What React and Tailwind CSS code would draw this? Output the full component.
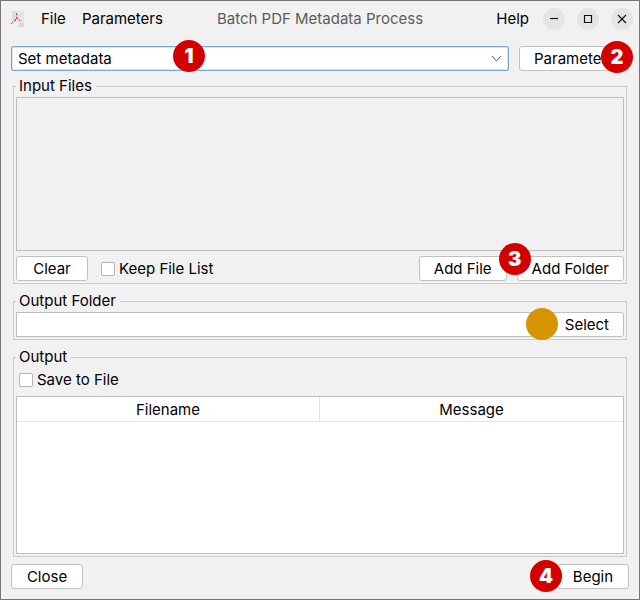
import React, { useState } from "react";

const Badge = ({ children, className }) => (
  <span className={`absolute z-10 flex h-8 w-8 items-center justify-center rounded-full text-xl font-black text-white ${className}`}>
    {children}
  </span>
);

const Button = ({ children, className = "" }) => (
  <button type="button" className={`h-[25px] rounded-[3px] border border-[#c0c0c0] bg-white px-[14px] leading-[23px] whitespace-nowrap ${className}`}>
    {children}
  </button>
);

const Checkbox = ({ label, checked, onChange }) => (
  <label className="flex items-center gap-1">
    <input
      type="checkbox"
      checked={checked}
      onChange={(e) => onChange(e.target.checked)}
      className="h-[14px] w-[14px] appearance-none rounded-[2px] border border-[#b4b4b4] bg-white checked:bg-[#5294e2]"
    />
    {label}
  </label>
);

const Group = ({ title, children, className = "" }) => (
  <fieldset className={`mx-[2px] min-w-0 border border-[#cccccc] px-[2px] pb-[2px] ${className}`}>
    <legend className="pr-1 pl-[3px] leading-5">{title}</legend>
    {children}
  </fieldset>
);

const AppIcon = () => (
  <svg width="13" height="16" viewBox="0 0 13 16" className="mr-[17px]">
    <path d="M1 0h12v16H1z" fill="#e2e6eb" />
    <path d="M1 0h5v5L1 10z" fill="#d3dfea" />
    <path d="M1 12l5-3 1 7H1z" fill="#f6f6f6" />
    <path d="M7 13l6-2v5H6z" fill="#d9dadd" />
    <path d="M0 13l2-2 2-1 1-2 1-5 1 4 2 2 2 1" fill="none" stroke="#f0b4b4" />
    <path d="M5 2h1v2H5zM5 6h1v2H5zM4 8h1v2H4zM3 9h1v1H3zM1 11h1v1H1zM0 12h1v1H0zM6 7h1v1H6zM8 9h1v1H8z" fill="#d94444" />
  </svg>
);

const WindowButton = ({ label, path }) => (
  <button type="button" aria-label={label} className="h-[22px] w-[22px] rounded-full bg-[#e4e4e4]">
    <svg width="22" height="22" viewBox="0 0 22 22" fill="none" stroke="#111" strokeWidth="1.2">
      <path d={path} />
    </svg>
  </button>
);

const TitleBar = () => (
  <header className="grid h-[35px] grid-cols-[1fr_auto_1fr] items-center">
    <div className="flex items-center pl-[10px]">
      <AppIcon />
      <button type="button" className="mr-4">File</button>
      <button type="button">Parameters</button>
    </div>
    <h1 className="text-[#5c5c5c]">Batch PDF Metadata Process</h1>
    <div className="flex items-center justify-end gap-3 pr-[6px]">
      <button type="button" className="mr-[2px]">Help</button>
      <WindowButton label="Minimize" path="M7 10.5h8" />
      <WindowButton label="Maximize" path="M7.5 7.5h7v7h-7z" />
      <WindowButton label="Close window" path="M7 7l8 8M15 7l-8 8" />
    </div>
  </header>
);

const App = () => {
  const [keep, setKeep] = useState(false);
  const [save, setSave] = useState(false);
  const [folder, setFolder] = useState("");

  return (
    <div className="flex min-h-screen flex-col border border-[#767676] bg-[#f1f1f1] font-['Inter','Noto_Sans',sans-serif] text-[15px] leading-5 text-black">
      <TitleBar />
      <main className="flex flex-1 flex-col px-[10px] pt-[10px] pb-[10px]">
        <div className="flex gap-[10px]">
          <div className="relative flex-1">
            <select aria-label="Operation" className="block h-[25px] w-full appearance-none rounded-[2px] border border-[#7aa7d6] bg-white px-[6px] leading-[23px] shadow-[inset_0_0_0_1px_#d5e5f5]">
              <option>Set metadata</option>
            </select>
            <svg className="pointer-events-none absolute top-[9px] right-[7px]" width="11" height="8" viewBox="0 0 11 8" fill="none" stroke="#555">
              <path d="M1 1l4.5 5L10 1" />
            </svg>
            <Badge className="-top-[6px] left-[162px] bg-[#d40000]">1</Badge>
          </div>
          <div className="relative">
            <Button className="w-[110px]">Parameters</Button>
            <Badge className="-top-[5px] -right-1 bg-[#d40000]">2</Badge>
          </div>
        </div>

        <Group title="Input Files" className="mt-[5px]">
          <ul aria-label="Input files" className="mt-px h-[154px] border border-[#bdbdbd]" />
          <div className="mt-[5px] flex items-center">
            <Button className="mr-[13px] w-[72px]">Clear</Button>
            <Checkbox label="Keep File List" checked={keep} onChange={setKeep} />
            <Button className="mr-[10px] ml-auto">Add File</Button>
            <div className="relative">
              <Button>Add Folder</Button>
              <Badge className="-top-[13px] -left-[18px] bg-[#d40000]">3</Badge>
            </div>
          </div>
        </Group>

        <Group title="Output Folder" className="mt-[7px]">
          <div className="mt-px flex gap-[10px]">
            <input
              type="text"
              aria-label="Output folder"
              value={folder}
              onChange={(e) => setFolder(e.target.value)}
              className="h-[25px] min-w-0 flex-1 border border-[#bdbdbd] bg-white px-[6px]"
            />
            <div className="relative">
              <Button>Select</Button>
              <Badge className="-top-1 -left-6 bg-[#d69400]" />
            </div>
          </div>
        </Group>

        <Group title="Output" className="mt-[7px] flex-1">
          <div className="ml-[3px] flex h-[29px] items-center pb-[3px]">
            <Checkbox label="Save to File" checked={save} onChange={setSave} />
          </div>
          <div className="min-h-[158px] border border-[#bdbdbd] bg-white">
            <table className="w-full table-fixed border-separate border-spacing-0">
              <thead>
                <tr>
                  <th className="border-r border-b border-[#e2e2e2] px-0 pt-[3px] pb-px font-normal">Filename</th>
                  <th className="border-b border-[#e2e2e2] px-0 pt-[3px] pb-px font-normal">Message</th>
                </tr>
              </thead>
              <tbody />
            </table>
          </div>
        </Group>

        <div className="mt-[7px] flex justify-between">
          <Button className="w-[72px]">Close</Button>
          <div className="relative">
            <Button className="w-[72px]">Begin</Button>
            <Badge className="-top-1 -left-[27px] bg-[#d40000]">4</Badge>
          </div>
        </div>
      </main>
    </div>
  );
};

export default App;
